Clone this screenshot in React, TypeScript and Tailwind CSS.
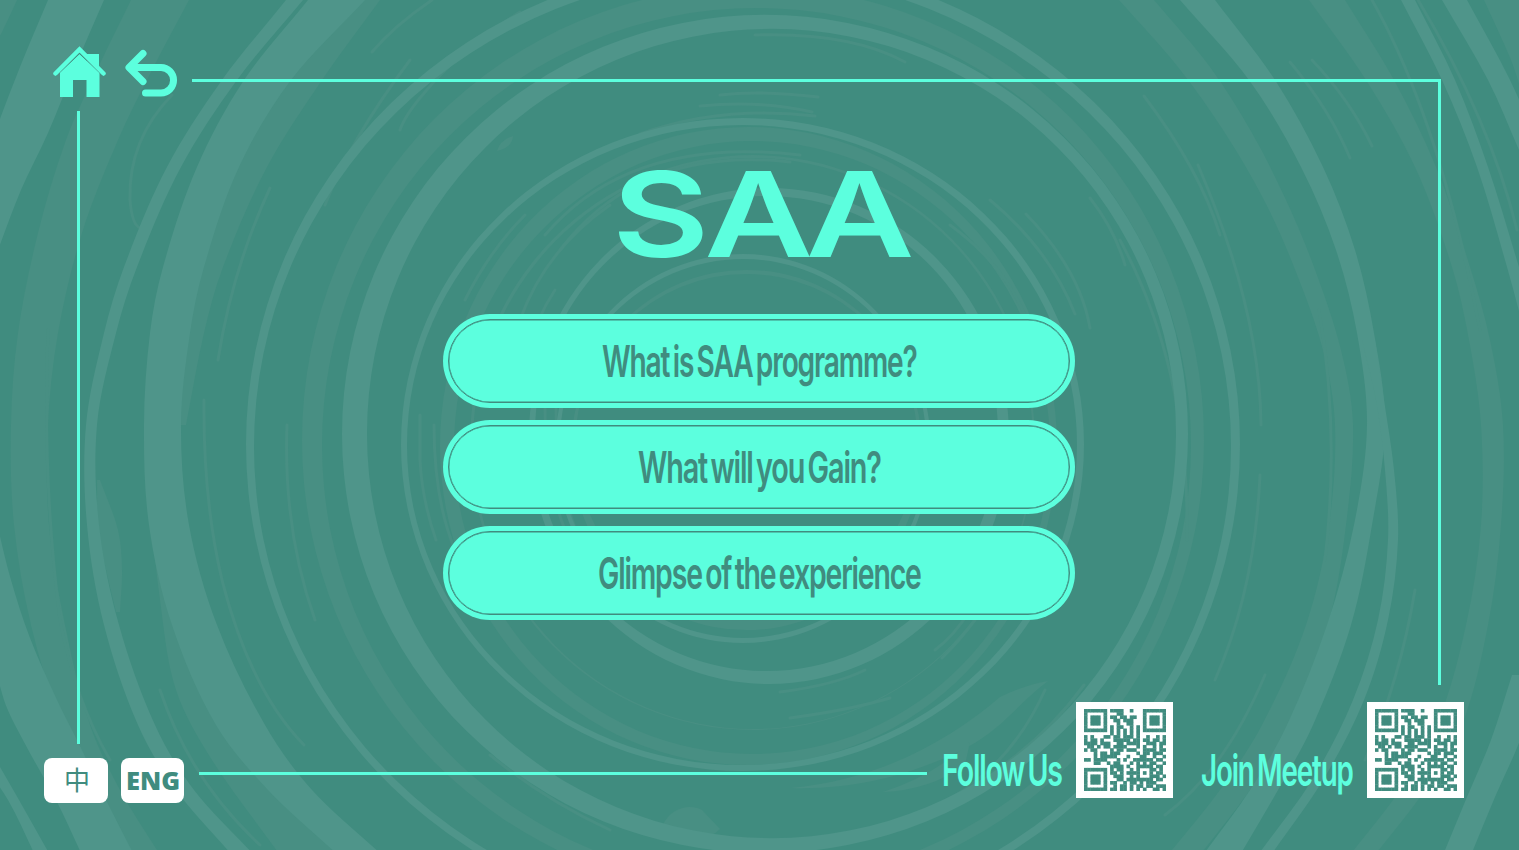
import { type ReactNode, useLayoutEffect, useRef, useState } from "react";

type Point = [number, number];

/** Text squeezed or stretched horizontally so that it fills its box. */
function FitText({ children, className }: { children: ReactNode; className: string }) {
  const box = useRef<HTMLSpanElement>(null);
  const inner = useRef<HTMLSpanElement>(null);
  const [scale, setScale] = useState(1);
  useLayoutEffect(() => {
    if (box.current && inner.current) {
      setScale(box.current.clientWidth / inner.current.offsetWidth);
    }
  }, [children]);
  return (
    <span ref={box} className={`block whitespace-nowrap ${className}`}>
      <span ref={inner} className="inline-block origin-left" style={{ transform: `scaleX(${scale})` }}>
        {children}
      </span>
    </span>
  );
}

/** Smooth curve in which x is a function of y, as path commands after the first point. */
function curve(points: Point[]) {
  const last = points.length - 1;
  const slope = (i: number) => {
    const a = points[Math.max(i - 1, 0)];
    const b = points[Math.min(i + 1, last)];
    return (b[0] - a[0]) / (b[1] - a[1]);
  };
  let d = "";
  for (let i = 0; i < last; i++) {
    const [x0, y0] = points[i];
    const [x1, y1] = points[i + 1];
    const h = (y1 - y0) / 3;
    d += `C${x0 + h * slope(i)} ${y0 + h} ${x1 - h * slope(i + 1)} ${y1 - h} ${x1} ${y1}`;
  }
  return d;
}

/** Band described by rows of [y, left edge, right edge]. */
function band(rows: [number, number, number][]) {
  const left = rows.map(([y, l]) => [l, y] as Point);
  const right = rows.map(([y, , r]) => [r, y] as Point).reverse();
  return `M${left[0].join(" ")}${curve(left)}L${right[0].join(" ")}${curve(right)}Z`;
}

function ellipse([l, t, r, b]: number[]) {
  const rx = (r - l) / 2;
  const ry = (b - t) / 2;
  const cy = (t + b) / 2;
  return `M${l} ${cy}A${rx} ${ry} 0 1 1 ${r} ${cy}A${rx} ${ry} 0 1 1 ${l} ${cy}Z`;
}

const brightRings = [
  [[555, 254, 931, 643], [559, 259, 927, 638]],
  [[529, 188, 1009, 684], [535, 196, 998, 671]],
  [[401, 118, 1084, 771], [407, 125, 1077, 765]],
  [[342, 15, 1188, 853], [367, 29, 1176, 838]],
  [[246, -39, 1240, 928], [254, -27, 1231, 920]],
];

const faintRings = [
  [[571, 270, 922, 630], [575, 274, 918, 616]],
  [[440, 127, 1057, 765], [454, 141, 1050, 754]],
  [[302, -14, 1204, 895], [322, 8, 1191, 882]],
  [[470, 155, 1035, 730], [473, 158, 1033, 729]],
];

const brightBands: [number, number, number][][] = [
  [[0, 48, 104], [67, 20, 75], [133, -5, 48], [190, -22, 21], [250, -36, -2]],
  [[520, -30, -4], [580, -20, 11], [638, -10, 30], [700, 4, 57], [742, 24, 78], [800, 56, 106], [855, 82, 134]],
  [[760, -20, -4], [800, 8, 19], [855, 35, 50]],
  [[0, 286, 303], [80, 222, 237], [167, 167, 181], [267, 124, 137], [333, 104, 116], [425, 86, 97], [525, 87, 99], [625, 104, 119], [725, 138, 155], [790, 176, 194], [855, 232, 254]],
  [[0, 308, 365], [80, 244, 291], [167, 197, 239], [267, 163, 204], [333, 150, 190], [425, 144, 181], [525, 149, 189], [625, 172, 217], [725, 216, 265], [790, 268, 312], [855, 338, 382]],
  [[0, 1180, 1215], [80, 1249, 1275], [167, 1301, 1323], [250, 1336, 1355], [333, 1357, 1374], [425, 1367, 1385], [525, 1354, 1372], [625, 1327, 1351], [725, 1287, 1313], [790, 1250, 1278], [855, 1203, 1240]],
  [[340, 1362, 1375], [400, 1376, 1384], [470, 1385, 1394], [540, 1388, 1398], [620, 1378, 1388], [700, 1353, 1364], [780, 1312, 1323], [855, 1258, 1271]],
  [[0, 1401, 1415], [80, 1442, 1455], [167, 1477, 1488], [267, 1507, 1519], [330, 1524, 1538]],
  [[0, 1442, 1467], [80, 1488, 1510], [150, 1519, 1540]],
  [[675, 1512, 1540], [740, 1491, 1520], [797, 1467, 1495], [855, 1443, 1471]],
];

const faintBands: [number, number, number][][] = [
  [[-2, -10, 18], [30, -15, 3], [45, -15, -5]],
  [[0, 131, 189], [70, 97, 152], [140, 66, 118], [233, 38, 82], [333, 18, 58], [425, 11, 48], [525, 14, 49], [625, 31, 65], [725, 61, 90], [790, 90, 120], [855, 130, 160]],
  [[0, 360, 380], [80, 286, 322], [167, 234, 267], [267, 200, 223], [333, 186, 204], [425, 178, 186]],
  [[500, 149, 153], [600, 160, 172], [690, 176, 205], [760, 212, 250], [855, 280, 340]],
  [[0, 1119, 1154], [67, 1178, 1210], [133, 1225, 1252], [200, 1264, 1286], [267, 1294, 1314], [350, 1323, 1341], [425, 1335, 1353], [525, 1329, 1346], [625, 1306, 1328], [725, 1262, 1290], [790, 1220, 1250], [855, 1168, 1200]],
  [[0, 1309, 1345], [80, 1366, 1394], [167, 1415, 1436], [267, 1452, 1470], [340, 1469, 1490], [425, 1481, 1503], [525, 1481, 1501], [625, 1466, 1488], [725, 1437, 1462], [790, 1400, 1425], [855, 1350, 1375]],
  [[0, 1484, 1530], [60, 1511, 1530], [90, 1521, 1530]],
  [[480, 97, 100], [530, 98, 118], [570, 106, 122], [612, 116, 120]],
];

const streaks = [
  "M432 0Q395 25 372 52", "M520 12Q460 50 425 92Q405 115 400 130", "M270 188Q232 270 218 360", "M172 95Q128 140 130 200Q132 225 140 228",
  "M204 400Q203 500 222 580Q250 690 304 745", "M287 425Q283 530 315 620", "M48 330Q42 480 60 620Q75 700 110 760",
  "M160 690Q190 780 260 845", "M720 95Q760 90 818 97", "M700 106Q760 100 812 112", "M640 134Q720 105 815 116",
  "M560 250Q640 145 790 162", "M545 235Q630 135 800 155", "M520 320Q545 250 610 205", "M465 300Q490 250 525 215",
  "M990 200Q1050 250 1075 314", "M1026 214Q1080 270 1090 328", "M950 225Q1005 265 1027 320", "M1144 96Q1200 170 1220 235",
  "M1198 165Q1260 310 1261 425", "M1090 198Q1115 230 1125 265", "M1290 62Q1330 110 1350 158",
  "M1312 60Q1350 100 1372 146", "M1260 475Q1255 590 1215 680", "M1120 240Q1190 370 1187 540", "M1372 0Q1440 120 1480 330",
  "M1418 0Q1490 120 1517 230", "M1319 310Q1340 430 1325 560", "M1415 590Q1400 680 1365 760", "M1265 675Q1225 770 1165 815",
  "M1084 685Q1040 745 980 780", "M780 692Q835 685 865 670", "M790 718Q850 710 890 698", "M935 650Q955 635 970 610", "M942 658Q960 640 975 620",
  "M490 755Q545 800 610 830", "M420 415V460Q422 500 436 540", "M434 425Q434 500 455 550", "M555 290Q535 320 530 350", "M545 407Q545 480 565 530", "M556 407Q556 480 576 530",
  "M410 60Q350 140 325 205", "M1045 690Q1000 790 900 820", "M755 35Q850 32 905 62",
];

function Swirl() {
  return (
    <svg className="absolute inset-0 h-full w-full" viewBox="0 0 1519 850" fill="none" aria-hidden="true">
      <g fill="#488f83" fillRule="evenodd">
        {faintRings.map(([o, i], n) => <path key={n} d={ellipse(o) + ellipse(i)} />)}
        {faintBands.map((rows, n) => <path key={n} d={band(rows)} />)}
        <path d="M663 825C670 808 690 803 702 810L720 829Q708 842 685 834Z" />
        <path d="M497 151Q512 148 513 136Q500 140 497 151Z" />
        <path d="M1048 681C1010 710 1000 735 945 758C900 777 850 790 790 788C880 780 950 740 1000 697Q1025 685 1048 681Z" />
        <path d="M970 742Q935 775 883 792Q930 790 965 765Z" />
      </g>
      <g stroke="#488f83" strokeWidth="3" strokeLinecap="round">
        {streaks.map((d) => <path key={d} d={d} />)}
      </g>
      <g fill="#4f958a" fillRule="evenodd">
        {brightRings.map(([o, i], n) => <path key={n} d={ellipse(o) + ellipse(i)} />)}
        {brightBands.map((rows, n) => <path key={n} d={band(rows)} />)}
      </g>
    </svg>
  );
}

const qrRows = [
  "#######.####..#...#######",
  "#.....#...##......#.....#",
  "#.###.#.##.##.##..#.###.#",
  "#.###.#..##.###...#.###.#",
  "#.###.#...#..##...#.###.#",
  "#.....#.#.##..#.#.#.....#",
  "#######.#.#.#.#.#.#######",
  "........#.#.#.#.#........",
  "#.#...##.##.###.#..#..#.#",
  "#.##.#...#####.##.##.##.#",
  "####.###..##.####..###.##",
  ".##.#.##.####...#.#..#.#.",
  "#.##....#.##.###..####.##",
  "...#.##.###.....#.##.###.",
  "...#.#####...#...##..#..#",
  "##.####...#.#..######.##.",
  "...##..#.##...#.#.#.##..#",
  "........####.#..#####.##.",
  "#######.#.##..#.#...##.#.",
  "#.....#.##.#.####.#.#.##.",
  "#.###.#..###..#.#...###.#",
  "#.###.#...##.########.##.",
  "#.###.#.##..#.##.#.###...",
  "#.....#..#.##.#.##.##.###",
  "#######.##.##.#.#.#..##.#",
];

function QrCode({ label }: { label: string }) {
  return (
    <div className="flex h-24 w-[97px] shrink-0 items-center justify-center bg-white">
      <svg className="h-[82px] w-[82px]" viewBox="0 0 25 25" role="img" aria-label={label}>
        {qrRows.flatMap((row, y) =>
          [...row].map((cell, x) =>
            cell === "#" ? <rect key={`${x}-${y}`} x={x - 0.05} y={y - 0.05} width="1.12" height="1.12" fill="#408c7f" /> : null,
          ),
        )}
      </svg>
    </div>
  );
}

function HomeIcon() {
  return (
    <svg className="h-[52px] w-[54px]" viewBox="0 0 54 52" fill="none">
      <path d="M34 8H46V24H34Z" fill="#5cffde" />
      <path d="M7 26.5L26.500 8L46.500 26.500V51H33.500V34H20V51H7Z" fill="#5cffde" />
      <path d="M2.500 29.500L26.500 6.500L50.500 29.500" stroke="#408c7f" strokeWidth="2" />
      <path d="M2.500 27.500L26.500 3.500L50.500 27.500" stroke="#5cffde" strokeWidth="4.500" strokeLinecap="round" />
    </svg>
  );
}

function BackIcon() {
  return (
    <svg className="h-[52px] w-[54px]" viewBox="0 0 54 52" fill="none" stroke="#5cffde" strokeWidth="7" strokeLinecap="round" strokeLinejoin="round">
      <path d="M18 7.500L4 21.500L18 35.500" />
      <path d="M5 21.500H36A12.500 12.700 0 0 1 36 47H20.500" />
    </svg>
  );
}

const options = [
  { text: "What is SAA programme?", width: "w-[315px]" },
  { text: "What will you Gain?", width: "w-[243px]" },
  { text: "Glimpse of the experience", width: "w-[323px]" },
];

export default function App() {
  return (
    <div className="relative h-[850px] w-[1519px] overflow-hidden bg-[#408c7f] font-['Inter',sans-serif]">
      <Swirl />
      <div className="relative flex h-full flex-col">
        <header className="flex h-[111px] shrink-0 pl-[53px]">
          <button aria-label="Home" className="mt-[46px] h-[52px]"><HomeIcon /></button>
          <button aria-label="Back" className="mt-[46px] ml-[18px] h-[52px]"><BackIcon /></button>
          <div className="mt-[79px] ml-[13px] w-[1249px] border-t-3 border-r-3 border-[#5cffde]" />
        </header>

        <div className="flex h-[591px] shrink-0 justify-between pr-[78px] pl-[77px]">
          <div className="h-[633px] w-[3px] bg-[#5cffde]" />
          <main className="flex flex-col items-center">
            <h1 className="mt-[43px] ml-[5px] h-[160px] w-[300px] text-[118px] leading-[120px] font-semibold text-[#5cffde]">
              <FitText className="w-[292px]">
                <span className="tracking-[-4px]">S</span>
                <span className="tracking-[-8px]">AA</span>
              </FitText>
            </h1>
            <nav className="flex flex-col gap-[12.5px]">
              {options.map((o) => (
                <button key={o.text} className="h-[93.5px] w-[632px] rounded-[47px] bg-[#5cffde] p-[5px]">
                  <span className="flex h-full w-full items-center justify-center rounded-[42px] border border-[#408c7f] text-[44px] leading-none font-semibold tracking-[-1.8px] text-[#408c7f] shadow-[inset_0_0_0_0.4px_#408c7f] [word-spacing:-4px]">
                    <FitText className={`${o.width} text-left`}>{o.text}</FitText>
                  </span>
                </button>
              ))}
            </nav>
          </main>
          <div className="h-[574px] w-[3px] bg-[#5cffde]" />
        </div>

        <footer className="flex h-[148px] shrink-0 items-start pl-11">
          <button className="mt-14 flex h-[45px] w-16 items-center justify-center rounded-lg bg-white pb-1 pl-0.5 font-['Noto_Sans_CJK_SC',sans-serif] text-[26px] leading-none text-[#408c7f]">
            中
          </button>
          <button className="mt-14 ml-[13px] flex h-[45px] w-[63px] items-center justify-center rounded-lg bg-white font-['Open_Sans',sans-serif] text-[25px] leading-none font-extrabold text-[#408c7f]">
            <FitText className="w-[54px] text-left">ENG</FitText>
          </button>
          <div className="mt-[70px] ml-[15px] h-[3px] w-[728px] bg-[#5cffde]" />
          <div className="mt-[44px] ml-[15px] w-[134px] text-[44px] leading-[48px] font-semibold tracking-[-1.8px] text-[#5cffde] [word-spacing:-4px]">
            <FitText className="w-[120px]">Follow Us</FitText>
          </div>
          <QrCode label="Follow us QR code" />
          <div className="mt-[44px] ml-[28px] w-[166px] text-[44px] leading-[48px] font-semibold tracking-[-1.8px] text-[#5cffde] [word-spacing:-4px]">
            <FitText className="w-[152px]">Join Meetup</FitText>
          </div>
          <QrCode label="Join meetup QR code" />
        </footer>
      </div>
    </div>
  );
}
